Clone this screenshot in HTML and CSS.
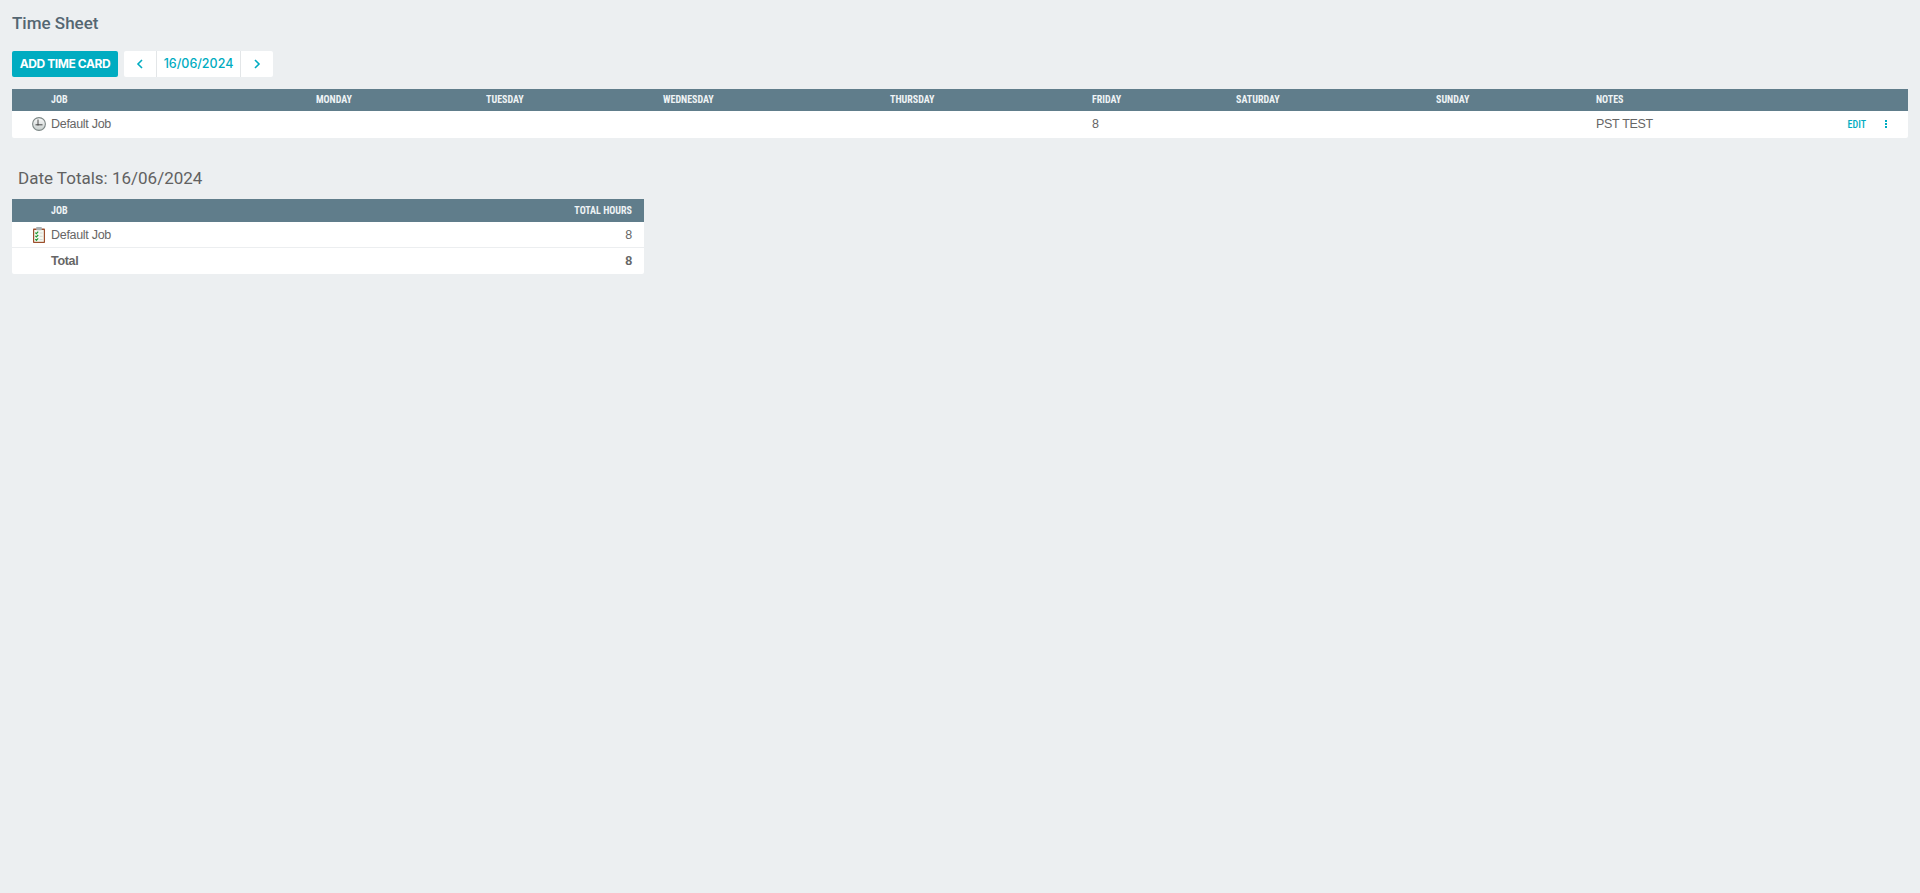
FILE: index.html
```html
<!DOCTYPE html>
<html lang="en">
<head>
<meta charset="utf-8">
<title>Time Sheet</title>
<link rel="stylesheet" href="styles.css">
</head>
<body>
<main class="page">
  <h1 class="page-title">Time Sheet</h1>
  <div class="toolbar">
    <button class="btn-primary" type="button">ADD TIME CARD</button>
    <div class="date-nav">
      <button class="nav-btn" type="button" aria-label="Previous"><svg width="8" height="10" viewBox="0 0 8 10"><path d="M6 1 2 5l4 4" fill="none" stroke="#00acc1" stroke-width="1.6"/></svg></button>
      <span class="nav-date">16/06/2024</span>
      <button class="nav-btn" type="button" aria-label="Next"><svg width="8" height="10" viewBox="0 0 8 10"><path d="M2 1l4 4-4 4" fill="none" stroke="#00acc1" stroke-width="1.6"/></svg></button>
    </div>
  </div>

  <table class="grid grid-week">
    <colgroup>
      <col class="c-icon"><col class="c-job"><col class="c-mon"><col class="c-tue"><col class="c-wed"><col class="c-thu"><col class="c-fri"><col class="c-sat"><col class="c-sun"><col class="c-notes"><col class="c-act">
    </colgroup>
    <thead>
      <tr><th></th><th>JOB</th><th>MONDAY</th><th>TUESDAY</th><th>WEDNESDAY</th><th>THURSDAY</th><th>FRIDAY</th><th>SATURDAY</th><th>SUNDAY</th><th>NOTES</th><th></th></tr>
    </thead>
    <tbody>
      <tr>
        <td class="icon-cell icon-clock">
          <svg class="icon" width="14" height="14" viewBox="0 0 14 14"><defs><linearGradient id="clk" x1="0" y1="0" x2="0" y2="1"><stop offset="0" stop-color="#fafafa"/><stop offset="1" stop-color="#c8cfce"/></linearGradient></defs><circle cx="7" cy="7" r="6.4" fill="url(#clk)" stroke="#7d8786" stroke-width="1.1"/><path d="M6 2.5v6M3.5 7.8h7" fill="none" stroke="#3a3a3a" stroke-width=".9"/></svg>
        </td>
        <td>Default Job</td><td></td><td></td><td></td><td></td><td>8</td><td></td><td></td><td>PST TEST</td>
        <td class="actions"><span class="edit">EDIT</span><svg class="kebab" width="2" height="8" viewBox="0 0 2 8"><path d="M0 0h2v2H0zM0 3h2v2H0zM0 6h2v2H0z" fill="#00acc1"/></svg></td>
      </tr>
    </tbody>
  </table>

  <h2 class="section-title">Date Totals: 16/06/2024</h2>

  <table class="grid grid-totals">
    <colgroup><col class="c-icon"><col><col class="c-total"></colgroup>
    <thead>
      <tr><th></th><th>JOB</th><th class="num">TOTAL HOURS</th></tr>
    </thead>
    <tbody>
      <tr class="sep">
        <td class="icon-cell icon-clip">
          <svg class="icon" width="12" height="16" viewBox="0 0 12 16"><rect y="1.5" width="12" height="14.5" rx=".8" fill="#9c4f2c"/><rect x="1.2" y="3" width="9.6" height="11.8" fill="#f4f8f0"/><rect x="3.2" y="0" width="5.6" height="3.2" rx=".6" fill="#a9afb2"/><path d="M2.3 5.6l1.1 1.1 1.8-2M2.3 8.9l1.1 1.1 1.8-2M2.3 12.2l1.1 1.1 1.8-2" fill="none" stroke="#1f9a33" stroke-width="1.2"/><path d="M6.6 6h3M6.6 9.3h3M6.6 12.6h3" stroke="#c3c9c5" stroke-width=".7"/></svg>
        </td>
        <td>Default Job</td><td class="num">8</td>
      </tr>
      <tr class="total"><td></td><td>Total</td><td class="num">8</td></tr>
    </tbody>
  </table>
</main>
</body>
</html>
```
FILE: styles.css
```css
* { box-sizing: border-box; }
html, body { margin: 0; height: 100%; }
body {
  background: #eceff1;
  color: #666;
  font-family: "Liberation Sans", Arial, sans-serif;
  font-size: 12.5px;
  letter-spacing: -.3px;
}
.page { padding: 0 12px; }
.page-title {
  margin: 0;
  padding-top: 14px;
  height: 51px;
  font: 500 17px/19px Roboto, sans-serif;
  letter-spacing: 0;
  color: #546672;
}
.toolbar { display: flex; gap: 6px; height: 26px; margin-bottom: 12px; }
.btn-primary {
  width: 106px;
  border: 0;
  padding: 0;
  border-radius: 2px;
  background: #00acc1;
  color: #fff;
  font: 700 12px/26px Inter, sans-serif;
  letter-spacing: -.42px;
}
.date-nav { display: flex; background: #fff; border-radius: 2px; width: 149px; }
.nav-btn {
  width: 32px;
  border: 0;
  padding: 0;
  background: none;
  display: flex;
  align-items: center;
  justify-content: center;
}
.nav-date {
  flex: 1;
  text-align: center;
  border-left: 1px solid #e3e6e8;
  border-right: 1px solid #e3e6e8;
  color: #00acc1;
  font: 500 12.5px/26px Inter, sans-serif;
  letter-spacing: 0;
}
.grid {
  border-collapse: separate;
  border-spacing: 0;
  table-layout: fixed;
  background: #fff;
  border-radius: 0 0 2px 2px;
}
.grid-week { width: 1896px; }
.grid-totals { width: 632px; }
.grid th {
  height: 22px;
  padding: 0;
  background: #607d8b;
  color: #eef3f5;
  text-align: left;
  font: 700 10px/22px "Roboto Condensed", Roboto, sans-serif;
  letter-spacing: 0;
}
.grid td { height: 27px; padding: 0; line-height: 22px; vertical-align: middle; }
.grid-week td { padding-bottom: 1px; }
.c-icon { width: 39px; }
.c-job { width: 265px; }
.c-mon { width: 170px; }
.c-tue { width: 177px; }
.c-wed { width: 227px; }
.c-thu { width: 202px; }
.c-fri { width: 144px; }
.c-sat { width: 200px; }
.c-sun { width: 160px; }
.c-notes { width: 250px; }
.c-total { width: 140px; }
.grid td.icon-clock { padding-right: 5px; }
.grid td.icon-clip { padding-right: 6px; }
.icon { display: block; margin-left: auto; }
.actions { text-align: right; white-space: nowrap; }
.edit {
  color: #00acc1;
  font: 500 10px/12px "Roboto Condensed", Roboto, sans-serif;
  letter-spacing: 0;
}
.kebab { margin: 0 21px 0 19px; vertical-align: 0; }
.section-title {
  margin: 0;
  padding: 31px 0 0 6px;
  height: 61px;
  font: 400 17px/19px Roboto, sans-serif;
  letter-spacing: 0;
  color: #616161;
}
.grid-totals th { height: 23px; }
.num { text-align: right; padding-right: 12px !important; }
.grid th.num { text-align: right; }
.grid-totals td { height: 26px; }
.sep td { border-bottom: 1px solid #eceef0; }
.total td { font-weight: 700; }
```
